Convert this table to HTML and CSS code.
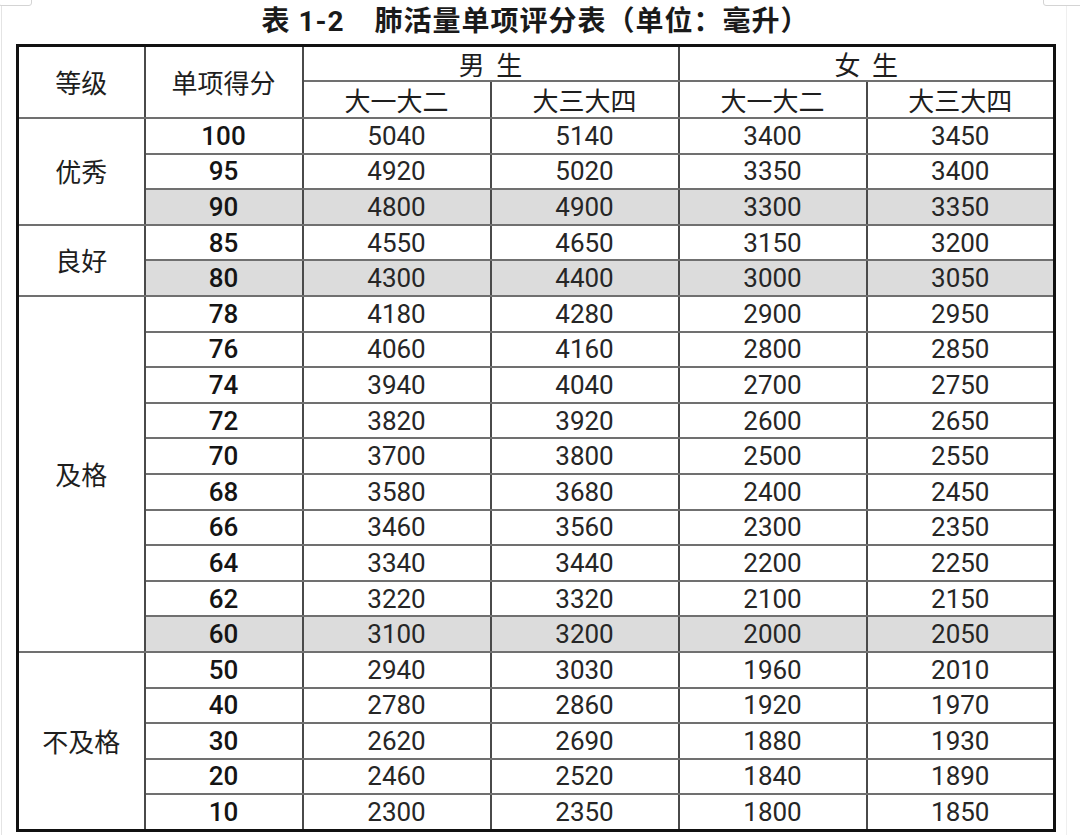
FILE: index.html
```html
<!DOCTYPE html>
<html lang="zh-CN">
<head>
<meta charset="utf-8">
<title>肺活量单项评分表</title>
<link rel="stylesheet" href="styles.css">
</head>
<body>
<div class="sheet">
  <span class="corner corner-left"></span>
  <span class="corner corner-right"></span>
  <div class="title">表 1-2<span class="gap"></span>肺活量单项评分表（单位：毫升）</div>
  <table class="score">
    <colgroup>
      <col class="c-grade"><col class="c-score"><col class="c-val"><col class="c-val"><col class="c-val"><col class="c-val">
    </colgroup>
    <thead>
      <tr class="h1">
        <th rowspan="2">等级</th>
        <th rowspan="2">单项得分</th>
        <th colspan="2">男&nbsp;&nbsp;生</th>
        <th colspan="2">女&nbsp;&nbsp;生</th>
      </tr>
      <tr class="h2">
        <th>大一大二</th><th>大三大四</th><th>大一大二</th><th>大三大四</th>
      </tr>
    </thead>
    <tbody>
      <tr class="g"><td class="grade" rowspan="3">优秀</td><td class="pt">100</td><td>5040</td><td>5140</td><td>3400</td><td>3450</td></tr>
      <tr><td class="pt">95</td><td>4920</td><td>5020</td><td>3350</td><td>3400</td></tr>
      <tr class="shade"><td class="pt">90</td><td>4800</td><td>4900</td><td>3300</td><td>3350</td></tr>
      <tr class="g"><td class="grade" rowspan="2">良好</td><td class="pt">85</td><td>4550</td><td>4650</td><td>3150</td><td>3200</td></tr>
      <tr class="shade"><td class="pt">80</td><td>4300</td><td>4400</td><td>3000</td><td>3050</td></tr>
      <tr class="g"><td class="grade" rowspan="10">及格</td><td class="pt">78</td><td>4180</td><td>4280</td><td>2900</td><td>2950</td></tr>
      <tr><td class="pt">76</td><td>4060</td><td>4160</td><td>2800</td><td>2850</td></tr>
      <tr><td class="pt">74</td><td>3940</td><td>4040</td><td>2700</td><td>2750</td></tr>
      <tr><td class="pt">72</td><td>3820</td><td>3920</td><td>2600</td><td>2650</td></tr>
      <tr><td class="pt">70</td><td>3700</td><td>3800</td><td>2500</td><td>2550</td></tr>
      <tr><td class="pt">68</td><td>3580</td><td>3680</td><td>2400</td><td>2450</td></tr>
      <tr><td class="pt">66</td><td>3460</td><td>3560</td><td>2300</td><td>2350</td></tr>
      <tr><td class="pt">64</td><td>3340</td><td>3440</td><td>2200</td><td>2250</td></tr>
      <tr><td class="pt">62</td><td>3220</td><td>3320</td><td>2100</td><td>2150</td></tr>
      <tr class="shade"><td class="pt">60</td><td>3100</td><td>3200</td><td>2000</td><td>2050</td></tr>
      <tr class="g"><td class="grade" rowspan="5">不及格</td><td class="pt">50</td><td>2940</td><td>3030</td><td>1960</td><td>2010</td></tr>
      <tr><td class="pt">40</td><td>2780</td><td>2860</td><td>1920</td><td>1970</td></tr>
      <tr><td class="pt">30</td><td>2620</td><td>2690</td><td>1880</td><td>1930</td></tr>
      <tr><td class="pt">20</td><td>2460</td><td>2520</td><td>1840</td><td>1890</td></tr>
      <tr><td class="pt">10</td><td>2300</td><td>2350</td><td>1800</td><td>1850</td></tr>
    </tbody>
  </table>
</div>
</body>
</html>
```

FILE: styles.css
```css
html, body {
  margin: 0;
  padding: 0;
  background: #ffffff;
}

body {
  font-family: Roboto, "Noto Sans CJK SC", sans-serif;
  color: #1f1f1f;
}

.sheet {
  position: relative;
  box-sizing: border-box;
  width: 1066px;
  height: 835px;
  margin-left: 1px;
  padding-left: 14px;
  border-left: 1px solid #e4e4e4;
  border-right: 1px solid #efefef;
}

.corner {
  position: absolute;
  top: -6px;
  height: 10px;
  border: 1px solid #d4d4d4;
  border-radius: 3px;
  background: #fff;
}

.corner-left {
  left: -4px;
  width: 32px;
}

.corner-right {
  left: 1041px;
  width: 60px;
}

.title {
  width: 1039px;
  height: 44px;
  box-sizing: border-box;
  padding-top: 2px;
  line-height: 40px;
  text-align: center;
  font-size: 28px;
  font-weight: 700;
  letter-spacing: 1px;
  color: #1a1a1a;
  white-space: nowrap;
}

.title .gap {
  display: inline-block;
  width: 30px;
}

.score {
  border-collapse: collapse;
  table-layout: fixed;
  width: 1039px;
  border: 3px solid #111111;
}

.c-grade { width: 127px; }
.c-score { width: 158px; }
.c-val { width: 188px; }

.score th,
.score td {
  padding: 0;
  text-align: center;
  vertical-align: middle;
  border-left: 2px solid #4a4a4a;
  border-right: 2px solid #4a4a4a;
  border-top: 2px solid #707070;
  border-bottom: 2px solid #707070;
  white-space: nowrap;
}

.score th {
  font-family: "Noto Sans CJK SC", sans-serif;
  font-weight: 400;
  font-size: 26px;
  color: #1e1e1e;
}

.score tr.h1 th {
  height: 33px;
  line-height: 30px;
}

.score tr.h2 th {
  height: 35px;
  line-height: 34px;
}

.score td {
  height: 33.6px;
  line-height: 30px;
  font-size: 26px;
  color: #262626;
}

.score td.pt {
  font-weight: 500;
  color: #141414;
}

.score td.grade {
  font-family: "Noto Sans CJK SC", sans-serif;
  font-size: 26px;
  color: #1e1e1e;
}

.score tr.g td {
  border-top: 2px solid #333333;
}

.score tr.shade td {
  background: #dcdcdc;
}
```
